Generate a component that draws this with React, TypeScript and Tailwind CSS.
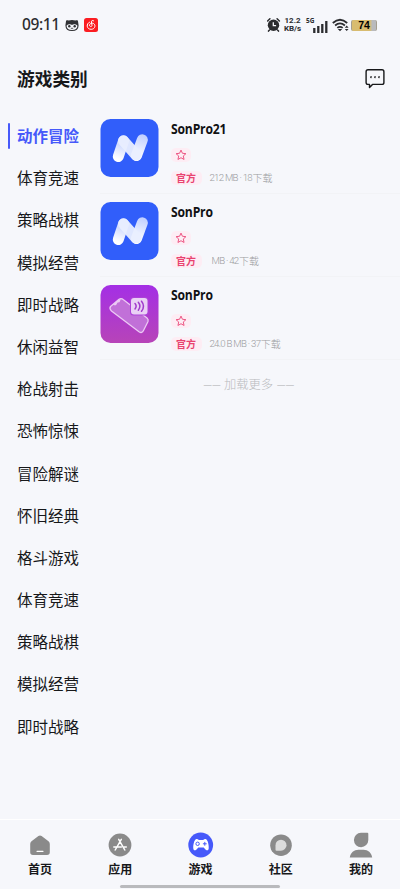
import React, { useState } from "react";

const categories = [
  "动作冒险",
  "体育竞速",
  "策略战棋",
  "模拟经营",
  "即时战略",
  "休闲益智",
  "枪战射击",
  "恐怖惊悚",
  "冒险解谜",
  "怀旧经典",
  "格斗游戏",
  "体育竞速",
  "策略战棋",
  "模拟经营",
  "即时战略",
];

const games = [
  { name: "SonPro21", size: "212 MB · 18", icon: "wave", indent: false },
  { name: "SonPro", size: "MB · 42", icon: "wave", indent: true },
  { name: "SonPro", size: "24.0 B MB · 37", icon: "phone", indent: false },
];

function StatusBar() {
  return (
    <div className="flex h-[50px] shrink-0 items-center pl-[22px] pr-[23px] text-[#2b2c2f]">
      <span className="w-[38px] whitespace-nowrap font-['Noto_Sans'] text-[15.5px] font-medium leading-none tracking-[-0.4px]">09:11</span>
      <svg className="ml-[5px] h-[13px] w-[14px]" viewBox="0 0 14 13">
        <path d="M1 2.200C1 1 2.500 1.200 3.500 1.500Q7 .6 10.500 1.500C11.500 1.200 13 1 13 2.200L13.600 6.500Q13.500 12 7 12T.4 6.500Z" fill="#303134" />
        <path d="M1.500 6.800Q2.500 5 4.300 5.200Q6 5 7 6Q8 5 9.700 5.200Q11.500 5 12.500 6.800Q12.200 11 7 11T1.500 6.800Z" fill="#f6f7fb" />
        <circle cx="4.300" cy="7.300" r="1.200" fill="#303134" />
        <circle cx="9.700" cy="7.300" r="1.200" fill="#303134" />
        <path d="M5.800 9.300h2.400" stroke="#303134" strokeWidth=".8" />
      </svg>
      <svg className="ml-[5px] h-[14px] w-[14px]" viewBox="0 0 14 14">
        <rect width="14" height="14" rx="2.500" fill="#fb1d22" />
        <path
          d="M9.600 2.800C8.500 2 7.100 2.700 7.400 4L8 7.200C8.200 9 5.500 9 5.500 7.300C5.500 5.800 7 5.200 8.500 5.200C12 5.500 11.800 11.300 7.200 11.300C2.300 11.300 2 5.500 5.500 4.200"
          fill="none"
          stroke="#fff"
          strokeWidth="1"
          strokeLinecap="round"
        />
      </svg>
      <div className="ml-auto flex items-center">
        <svg className="h-[14px] w-[14px]" viewBox="0 0 14 14">
          <circle cx="6.500" cy="7.300" r="5.700" fill="#2b2c2f" />
          <path d="M.6 3L2.900 .8M12.400 3L10.100 .8M2.500 12l-1 1.100M10.500 12l1 1.100" stroke="#2b2c2f" strokeWidth="1.500" strokeLinecap="round" />
          <path d="M6.300 4.300v3.400h2.800" fill="none" stroke="#f6f7fb" strokeWidth="1.300" />
        </svg>
        <div className="ml-[2.500px] flex w-[19px] flex-col items-center whitespace-nowrap font-['Roboto'] text-[8px] font-bold">
          <span className="h-[8.5px] leading-[8.5px]">12.2</span>
          <span className="h-[8.5px] leading-[8.5px] tracking-[-0.1px]">KB/s</span>
        </div>
        <div className="ml-[4px] flex h-[17px] w-[22px]">
          <span className="w-[7px] whitespace-nowrap font-['Open_Sans'] text-[6.5px] font-bold leading-[7px]">5G</span>
          <svg className="mt-[3px] h-[13px] w-[15px] shrink-0" viewBox="0 0 15 13">
            <path d="M1.300 13V8M5.300 13V6M9.300 13V4M13.300 13V1" stroke="#2b2c2f" strokeWidth="2.300" />
          </svg>
        </div>
        <svg className="ml-[4px] h-[14px] w-[17px]" viewBox="0 0 17 14">
          <path d="M.8 5Q8 -1.500 15.200 5M3.100 7.500Q8 3.300 12.900 7.500M5.300 9.900Q8 7.800 10.700 9.900" fill="none" stroke="#2b2c2f" strokeWidth="1.800" />
          <path d="M5.800 11h4.400l-2.200 2.300ZM12.800 9.800l1.900-2.200 1.900 2.200ZM12.800 10.900h3.800l-1.900 2.200Z" fill="#2b2c2f" />
        </svg>
        <div className="ml-[2px] flex h-[11px] w-[26px] items-center justify-center rounded-[2px] border-x border-[#a49e90] bg-linear-to-r from-[#d8bc70] from-75% to-[#b9babd] to-85% font-['Liberation_Sans'] text-[10.5px] font-bold leading-none text-black">
          74
        </div>
      </div>
    </div>
  );
}

function GameIcon({ type }: { type: string }) {
  if (type === "phone") {
    return (
      <svg className="h-[58px] w-[59px] shrink-0" viewBox="-0.500 0 59 58">
        <defs>
          <linearGradient id="purple" x2="0" y2="1">
            <stop stopColor="#a42fe5" />
            <stop offset="1" stopColor="#b744b8" />
          </linearGradient>
        </defs>
        <rect width="58" height="58" rx="10" fill="url(#purple)" />
        <path
          d="M10 21.500L18.500 14.300Q20.800 12.900 23 14.800L46.500 33Q48.200 34.500 47.500 36.500L43 45.500Q41.500 48.800 38.500 46.700L11 26Q8.500 23.500 10 21.500Z"
          fill="#c170d8"
          stroke="#ecc9f4"
          strokeWidth="1.300"
        />
        <path d="M12.500 19.500Q14.500 21.200 16 19.500Q16.500 17 19 17.300L20.300 14.300L18 14.500Z" fill="#ecc9f4" />
        <rect x="29.500" y="12" width="18.500" height="18.500" rx="3.500" fill="#ad42d9" />
        <rect x="30.500" y="13" width="16.500" height="16.500" rx="3" fill="#ead1f5" />
        <path d="M34.500 18.500Q36.800 21 34.500 24M37.800 17.300Q41 21 37.800 25.200M41 16.200Q45 21 41 26.300" fill="none" stroke="#a13bcc" strokeWidth="1.500" strokeLinecap="round" />
      </svg>
    );
  }
  return (
    <svg className="h-[58px] w-[59px] shrink-0" viewBox="-0.500 0 59 58">
      <defs>
        <linearGradient id="leftLeg" gradientUnits="userSpaceOnUse" x1="23" y1="22" x2="17" y2="40">
          <stop stopColor="#c3d1ff" />
          <stop offset="1" stopColor="#fff" />
        </linearGradient>
        <linearGradient id="rightLeg" gradientUnits="userSpaceOnUse" x1="42" y1="17" x2="35" y2="38">
          <stop stopColor="#c3d1ff" />
          <stop offset="1" stopColor="#fff" />
        </linearGradient>
      </defs>
      <rect width="58" height="58" rx="10" fill="#315efa" />
      <g fill="none" strokeWidth="11" strokeLinecap="round">
        <path d="M23 22L17.800 37.500" stroke="url(#leftLeg)" />
        <path d="M41.800 20.800L36 36.500" stroke="url(#rightLeg)" />
        <path d="M23 21.800L35.500 36" stroke="#e9eeff" strokeOpacity=".95" />
      </g>
    </svg>
  );
}

function GameRow({ game }: { game: (typeof games)[number] }) {
  return (
    <div className="flex h-[83px] flex-col pt-[8px]">
      <div className="flex h-[75px] shrink-0 border-b border-[#f2f3f6]">
        <GameIcon type={game.icon} />
        <div className="flex flex-1 flex-col items-start pl-[11.5px]">
          <h2 className="h-[20px] origin-left scale-x-[0.9] whitespace-nowrap font-['Open_Sans'] text-[13.5px] font-bold leading-[20px] tracking-[-0.2px] text-[#111214]">{game.name}</h2>
          <div className="mt-[9px] flex h-[14px] w-[20px] items-center justify-center rounded-[5px] bg-[#fdedf4]">
            <svg className="h-[12px] w-[12px]" viewBox="0 0 11 11">
              <path d="M5.500 1l1.300 2.900 3.200.4-2.400 2.100.7 3.200-2.800-1.600-2.800 1.600.7-3.200L1 4.300l3.200-.4Z" fill="none" stroke="#ec5381" strokeWidth=".9" strokeLinejoin="round" />
            </svg>
          </div>
          <div className="mt-[9px] flex h-[14px] items-center">
            <span className="flex h-[14px] w-[31px] items-center justify-center rounded-[5px] bg-[#fdedf4] text-[10px] font-bold leading-none text-[#e94370]">官方</span>
            <span className={game.indent ? "ml-[10px] flex items-center whitespace-nowrap text-[#9b9ca0]" : "ml-[8px] flex items-center whitespace-nowrap text-[#9b9ca0]"}>
              <span className="font-['Roboto'] text-[9.7px] font-light leading-none tracking-[-0.75px]">{game.size}</span>
              <span className="ml-[0.5px] text-[10px] font-light leading-none">下载</span>
            </span>
          </div>
        </div>
      </div>
    </div>
  );
}

function HomeIcon() {
  return (
    <svg className="h-[26px] w-[26px]" viewBox="0 0 26 26">
      <path d="M11.400 4.100Q13 2.900 14.600 4.100L21.500 9.200Q22.800 10.200 22.800 12V20.300Q22.800 23 20 23H6Q3.200 23 3.200 20.300V12Q3.200 10.200 4.500 9.200Z" fill="#8a8a8a" />
      <path d="M10 19.300h6" stroke="#fff" strokeWidth="1.200" strokeLinecap="round" />
    </svg>
  );
}

function AppsIcon() {
  return (
    <svg className="h-[26px] w-[26px]" viewBox="0 0 26 26">
      <circle cx="13" cy="13" r="11.400" fill="#8a8a8a" />
      <path d="M11.700 7.300L17.800 18M14.300 7.300L8.200 18M6.800 15h7.500M17 15h2.300" fill="none" stroke="#fff" strokeWidth="1.500" strokeLinecap="round" />
    </svg>
  );
}

function GamesIcon() {
  return (
    <svg className="h-[26px] w-[26px]" viewBox="0 0 26 26">
      <circle cx="12.700" cy="13" r="12.400" fill="#4659fa" />
      <path d="M8.300 7Q9.700 6.700 10.800 8H15.200Q16.300 6.700 17.700 7C20 7.800 21 13.500 20.700 16.500C20.400 19 18.300 18.800 17 17L15.700 15.600H10.300L9 17C7.700 18.800 5.600 19 5.300 16.500C5 13.500 6 7.800 8.300 7Z" fill="#fff" />
      <circle cx="9.600" cy="11.800" r="1.700" fill="none" stroke="#4659fa" strokeWidth="1" />
      <path d="M16.800 9.900v3.800M14.900 11.800h3.800" stroke="#4659fa" strokeWidth="1" />
    </svg>
  );
}

function CommunityIcon() {
  return (
    <svg className="h-[26px] w-[26px]" viewBox="0 0 26 26">
      <circle cx="13" cy="13.200" r="10.800" fill="#8a8a8a" />
      <path d="M7.500 13.200A5.500 5.500 0 1 1 13 18.700H8.500Q7.500 18.700 7.500 17.700Z" fill="#dcdcdc" />
    </svg>
  );
}

function ProfileIcon() {
  return (
    <svg className="h-[26px] w-[26px]" viewBox="0 0 26 26">
      <path d="M13 .8H19.300Q20.300 .8 20.300 1.800V8A7.200 7.200 0 1 1 13 .8ZM1.800 25.500C2.500 20.500 6 17.700 10.500 17.700H15.500C20 17.700 23.500 20.500 24.200 25.500Z" fill="#8a8a8a" />
    </svg>
  );
}

const tabs = [
  { label: "首页", icon: HomeIcon },
  { label: "应用", icon: AppsIcon },
  { label: "游戏", icon: GamesIcon },
  { label: "社区", icon: CommunityIcon },
  { label: "我的", icon: ProfileIcon },
];

export default function App() {
  const [active, setActive] = useState(0);

  return (
    <div className="flex h-[889px] w-[400px] flex-col overflow-hidden bg-[#f6f7fb] font-['Noto_Sans_CJK_SC',sans-serif] text-[#17181a]">
      <StatusBar />

      <header className="flex h-[61px] shrink-0 items-center justify-between pl-[17px] pr-[15px] pb-[4px]">
        <h1 className="text-[17.7px] font-bold leading-none">游戏类别</h1>
        <svg className="h-[20px] w-[20px]" viewBox="0 0 20 20" fill="none" stroke="#17181a">
          <path d="M3 .8H17Q18.900 .8 18.900 2.700V13.500Q18.900 15.400 17 15.400H7.500L4.500 18.500V15.400H3Q1.100 15.400 1.100 13.500V2.700Q1.100 .8 3 .8Z" strokeWidth="1.400" strokeLinejoin="round" />
          <path d="M6.200 7.200l-.4 1.900M10.200 7.200l-.4 1.900M14.200 7.200l-.4 1.900" strokeWidth="1.300" />
        </svg>
      </header>

      <main className="flex flex-1 overflow-hidden">
        <nav className="flex w-[100px] shrink-0 flex-col pt-[3.7px]">
          {categories.map((name, i) => (
            <button key={i} onClick={() => setActive(i)} className="flex h-[42.2px] shrink-0 items-center pl-[8px] text-left">
              <span className={i === active ? "h-[26px] w-[2px] rounded-full bg-[#4659fa]" : "h-[26px] w-[2px]"} />
              <span className={i === active ? "ml-[7px] text-[15.5px] font-bold leading-none text-[#4659fa]" : "ml-[7px] text-[15.5px] leading-none"}>
                {name}
              </span>
            </button>
          ))}
        </nav>

        <section className="flex-1">
          {games.map((game, i) => (
            <GameRow key={i} game={game} />
          ))}
          <p className="mt-[14px] flex items-center justify-center gap-[3.5px] pr-[3px] text-[12.3px] font-light leading-[20px] text-[#b9babd]">
            <span className="mt-[3px] font-['Roboto'] text-[12px] leading-[16px] tracking-[-0.5px]">——</span>
            <span>加载更多</span>
            <span className="mt-[3px] font-['Roboto'] text-[12px] leading-[16px] tracking-[-0.5px]">——</span>
          </p>
        </section>
      </main>

      <footer className="flex h-[70px] shrink-0 flex-col border-t border-white">
        <div className="flex h-[65px] w-[401px] pt-[12px]">
          {tabs.map(({ label, icon: Icon }) => (
            <div key={label} className="flex flex-1 flex-col items-center">
              <Icon />
              <span className="mt-[3.5px] text-[12px] font-bold leading-[13px]">{label}</span>
            </div>
          ))}
        </div>
        <div className="mx-auto h-[3px] w-[160px] shrink-0 rounded-full bg-[#b9babd]" />
      </footer>
    </div>
  );
}
